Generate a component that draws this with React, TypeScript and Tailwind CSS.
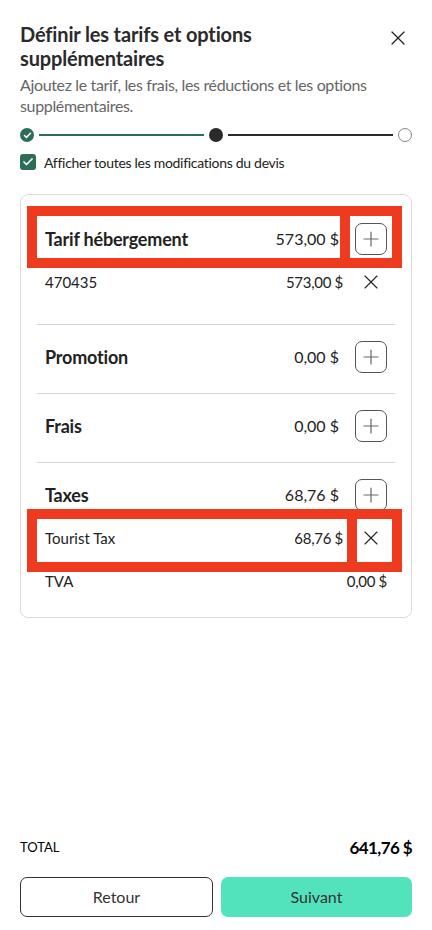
import { Plus, X, Check } from "lucide-react";

const font = { fontFamily: '"Lato", "Noto Sans", sans-serif' };

function PlusButton() {
  return (
    <button className="ml-4 flex h-8 w-8 shrink-0 items-center justify-center rounded-[7px] border border-[#555]">
      <Plus className="h-6 w-6 text-[#666]" strokeWidth={1.2} />
    </button>
  );
}

function SectionRow({ label, amount }: { label: string; amount: string }) {
  return (
    <div className="flex h-8 items-center px-2">
      <span className="flex-1 text-[18px] font-bold tracking-[-0.2px] text-[#222]">{label}</span>
      <span className="text-[16px] text-[#222]">{amount}</span>
      <PlusButton />
    </div>
  );
}

function LineRow({ label, amount, removable = true }: { label: string; amount: string; removable?: boolean }) {
  return (
    <div className="mt-[11px] flex h-8 items-center px-2">
      <span className="flex-1 text-[15px] text-[#222]">{label}</span>
      <span className="text-[15px] tracking-[-0.3px] text-[#222]">{amount}</span>
      {removable && (
        <button className="ml-3 flex h-8 w-8 shrink-0 items-center justify-center">
          <X className="h-6 w-6 text-[#222]" strokeWidth={1.1} />
        </button>
      )}
    </div>
  );
}

export default function App() {
  return (
    <div style={font} className="flex h-[930px] w-[432px] flex-col bg-white px-5 text-[#222]">
      {/* header */}
      <div className="flex items-start justify-between pt-[22px]">
        <h1 className="w-[300px] text-[20px] font-bold leading-6 tracking-[-0.15px] text-[#2a2a2a]">
          Définir les tarifs et options supplémentaires
        </h1>
        <button className="mr-[2px] mt-[4px]">
          <X className="h-6 w-6 text-[#222]" strokeWidth={1.2} />
        </button>
      </div>
      <p className="mt-[4px] text-[16px] leading-[21px] tracking-[-0.35px] text-[#666]">
        Ajoutez le tarif, les frais, les réductions et les options supplémentaires.
      </p>

      {/* stepper */}
      <div className="mt-3 flex items-center gap-[5px]">
        <div className="flex h-[14px] w-[14px] items-center justify-center rounded-full bg-[#2b6e55]">
          <Check className="h-[9px] w-[9px] text-white" strokeWidth={4} />
        </div>
        <div className="h-[2px] flex-1 bg-[#2b6e55]" />
        <div className="h-[14px] w-[14px] rounded-full bg-[#2a2a2a]" />
        <div className="h-[2px] flex-1 bg-[#2a2a2a]" />
        <div className="h-[14px] w-[14px] rounded-full border-[1.5px] border-[#888]" />
      </div>

      {/* checkbox */}
      <label className="mt-[10px] flex h-5 items-center gap-2">
        <span className="flex h-4 w-4 items-center justify-center rounded-[3px] bg-[#2b6e55]">
          <Check className="h-3 w-3 text-white" strokeWidth={3.5} />
        </span>
        <span className="text-[14px] tracking-[-0.3px] text-[#222]">Afficher toutes les modifications du devis</span>
      </label>

      {/* card */}
      <div className="relative mt-[22px] rounded-lg border border-[#dcdcdc] px-4 pb-5 pt-7">
        <div className="pb-[26px]">
          <SectionRow label="Tarif hébergement" amount="573,00 $" />
          <LineRow label="470435" amount="573,00 $" />
        </div>
        <div className="border-t border-[#d6d6d6] pb-5 pt-4">
          <SectionRow label="Promotion" amount="0,00 $" />
        </div>
        <div className="border-t border-[#d6d6d6] pb-5 pt-4">
          <SectionRow label="Frais" amount="0,00 $" />
        </div>
        <div className="border-t border-[#d6d6d6] pt-4">
          <SectionRow label="Taxes" amount="68,76 $" />
          <LineRow label="Tourist Tax" amount="68,76 $" />
          <LineRow label="TVA" amount="0,00 $" removable={false} />
        </div>

        {/* annotation frames */}
        <div className="pointer-events-none absolute left-[6px] top-[11px] flex h-[62px] w-[375px] border-[10px] border-[#ee3a1f]">
          <div className="w-[303px]" />
          <div className="w-[10px] bg-[#ee3a1f]" />
        </div>
        <div className="pointer-events-none absolute left-[6px] top-[314px] flex h-[63px] w-[375px] border-[10px] border-[#ee3a1f]">
          <div className="w-[310px]" />
          <div className="w-[10px] bg-[#ee3a1f]" />
        </div>
      </div>

      {/* footer */}
      <div className="mt-auto pb-[13px]">
        <div className="flex items-center justify-between">
          <span className="text-[13px] uppercase text-black">Total</span>
          <span className="text-[17px] font-bold tracking-[-0.6px] text-black">641,76 $</span>
        </div>
        <div className="mt-[17px] flex gap-2">
          <button className="h-10 flex-1 rounded-[7px] border border-[#333] text-[16px] text-[#333]">Retour</button>
          <button className="h-10 flex-1 rounded-[7px] bg-[#52e3bc] text-[16px] text-[#333]">Suivant</button>
        </div>
      </div>
    </div>
  );
}
